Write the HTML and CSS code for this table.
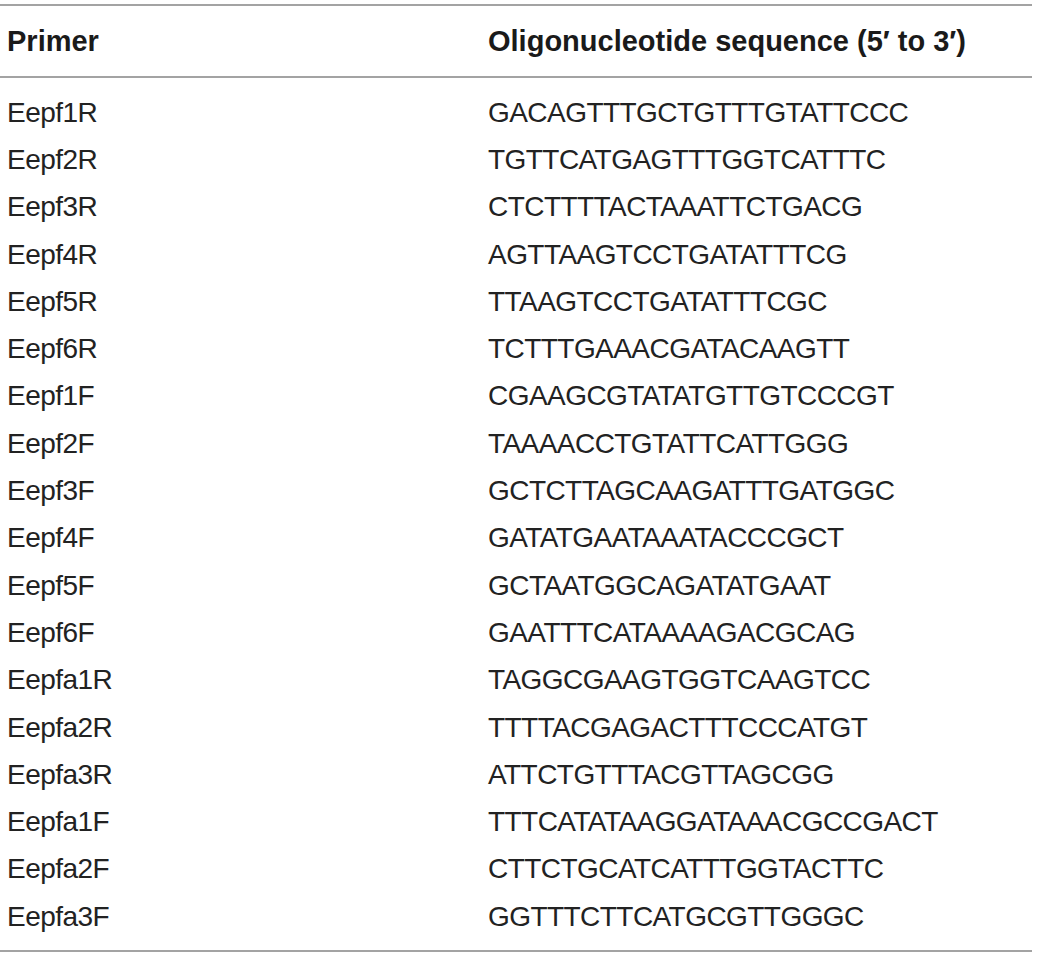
FILE: index.html
```html
<!DOCTYPE html>
<html lang="en">
<head>
<meta charset="utf-8">
<title>Primers</title>
<link rel="stylesheet" href="styles.css">
</head>
<body>
<div class="table">
  <div class="head">
    <div class="cell">Primer</div>
    <div class="cell">Oligonucleotide sequence (5′ to 3′)</div>
  </div>
  <div class="body">
    <div class="row"><div class="cell">Eepf1R</div><div class="cell">GACAGTTTGCTGTTTGTATTCCC</div></div>
    <div class="row"><div class="cell">Eepf2R</div><div class="cell">TGTTCATGAGTTTGGTCATTTC</div></div>
    <div class="row"><div class="cell">Eepf3R</div><div class="cell">CTCTTTTACTAAATTCTGACG</div></div>
    <div class="row"><div class="cell">Eepf4R</div><div class="cell">AGTTAAGTCCTGATATTTCG</div></div>
    <div class="row"><div class="cell">Eepf5R</div><div class="cell">TTAAGTCCTGATATTTCGC</div></div>
    <div class="row"><div class="cell">Eepf6R</div><div class="cell">TCTTTGAAACGATACAAGTT</div></div>
    <div class="row"><div class="cell">Eepf1F</div><div class="cell">CGAAGCGTATATGTTGTCCCGT</div></div>
    <div class="row"><div class="cell">Eepf2F</div><div class="cell">TAAAACCTGTATTCATTGGG</div></div>
    <div class="row"><div class="cell">Eepf3F</div><div class="cell">GCTCTTAGCAAGATTTGATGGC</div></div>
    <div class="row"><div class="cell">Eepf4F</div><div class="cell">GATATGAATAAATACCCGCT</div></div>
    <div class="row"><div class="cell">Eepf5F</div><div class="cell">GCTAATGGCAGATATGAAT</div></div>
    <div class="row"><div class="cell">Eepf6F</div><div class="cell">GAATTTCATAAAAGACGCAG</div></div>
    <div class="row"><div class="cell">Eepfa1R</div><div class="cell">TAGGCGAAGTGGTCAAGTCC</div></div>
    <div class="row"><div class="cell">Eepfa2R</div><div class="cell">TTTTACGAGACTTTCCCATGT</div></div>
    <div class="row"><div class="cell">Eepfa3R</div><div class="cell">ATTCTGTTTACGTTAGCGG</div></div>
    <div class="row"><div class="cell">Eepfa1F</div><div class="cell">TTTCATATAAGGATAAACGCCGACT</div></div>
    <div class="row"><div class="cell">Eepfa2F</div><div class="cell">CTTCTGCATCATTTGGTACTTC</div></div>
    <div class="row"><div class="cell">Eepfa3F</div><div class="cell">GGTTTCTTCATGCGTTGGGC</div></div>
  </div>
</div>
</body>
</html>
```

FILE: styles.css
```css
html, body {
  margin: 0;
  padding: 0;
  background: #ffffff;
}

body {
  font-family: "Liberation Sans", Arial, sans-serif;
  color: #1c1c1c;
}

.table {
  margin-top: 4px;
  width: 1032px;
  border-top: 2px solid #a3a3a3;
  border-bottom: 2px solid #a3a3a3;
}

.head {
  display: grid;
  grid-template-columns: 481px 1fr;
  align-items: center;
  height: 70px;
  padding-left: 7px;
  border-bottom: 2px solid #a3a3a3;
  font-weight: bold;
  font-size: 29px;
  color: #1a1a1a;
}

.body {
  padding: 10px 0 11px 0;
}

.row {
  display: grid;
  grid-template-columns: 481px 1fr;
  align-items: center;
  height: 47.3px;
  padding-left: 7px;
  font-size: 28px;
  letter-spacing: -0.55px;
  color: #222222;
}

.row .cell {
  padding-top: 2px;
}

.cell {
  white-space: nowrap;
}
```
